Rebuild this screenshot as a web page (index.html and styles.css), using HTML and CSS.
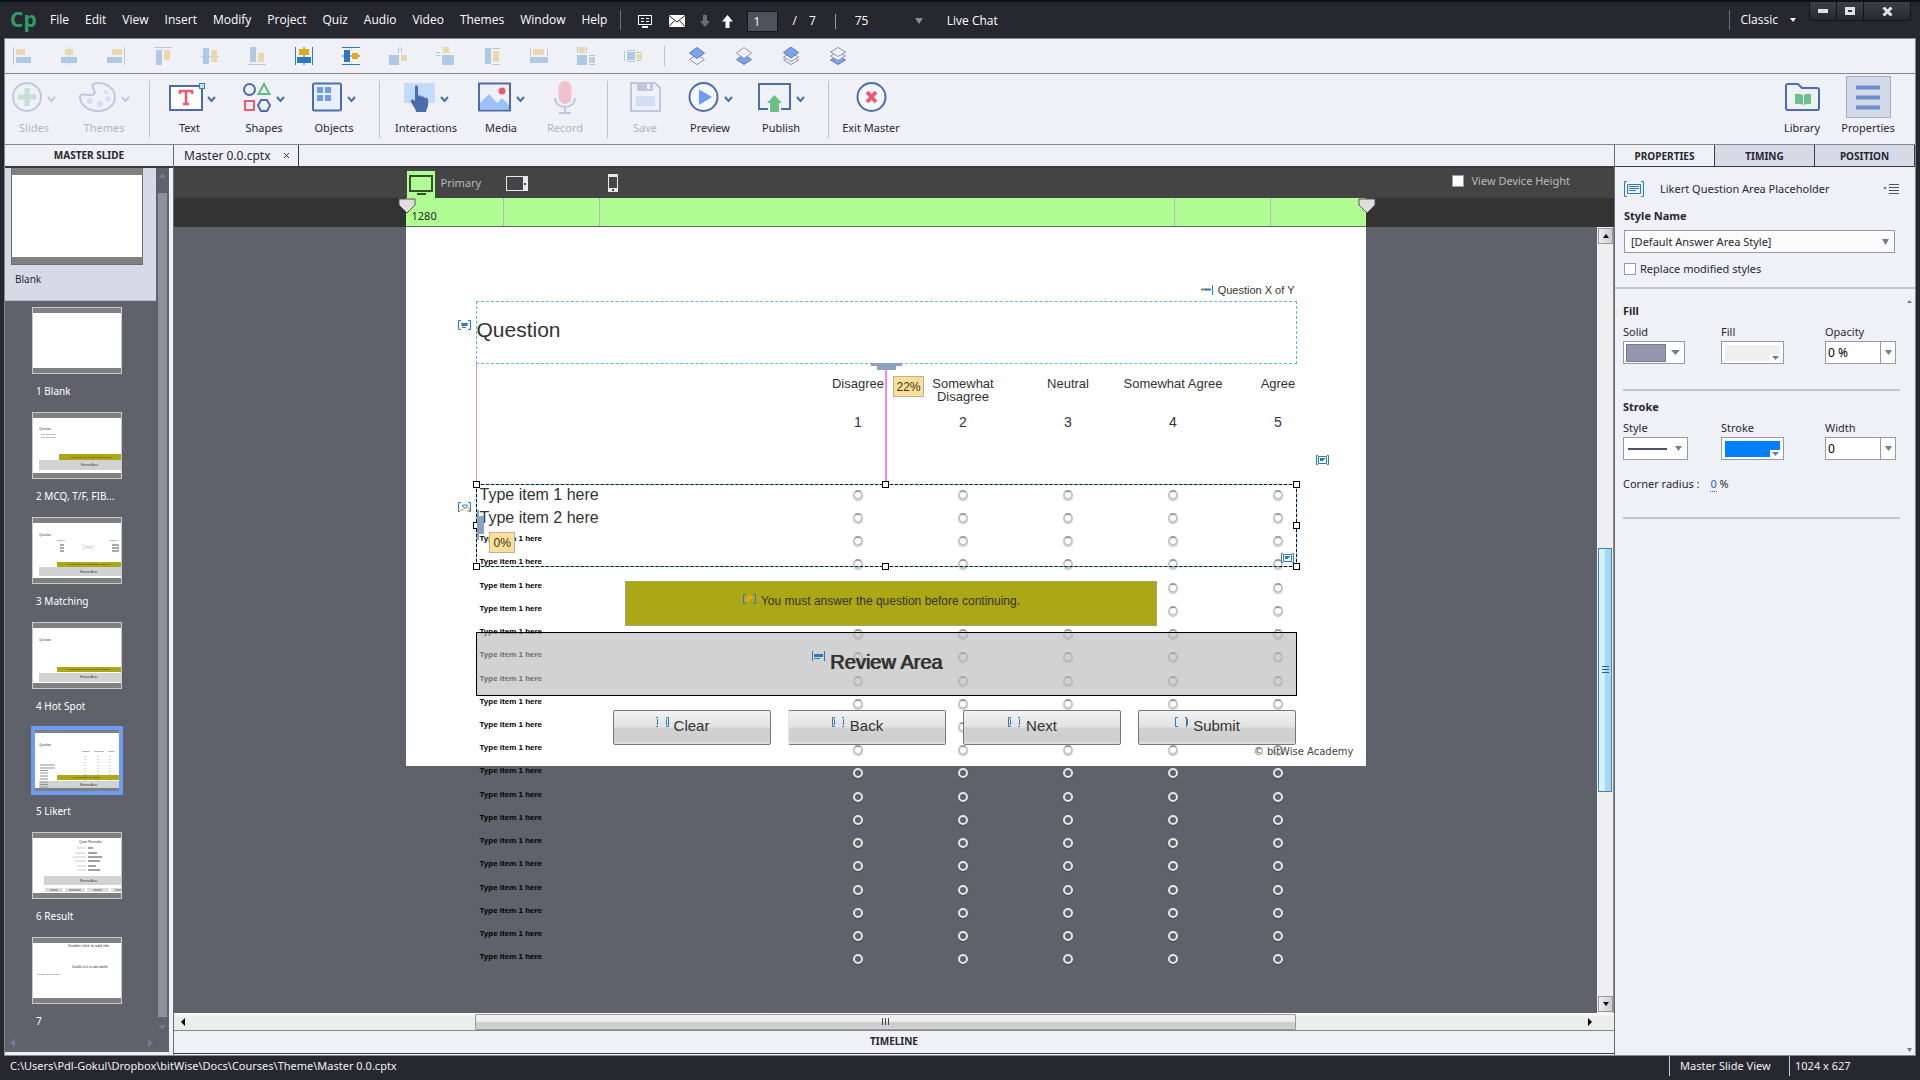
FILE: index.html
```html
<!DOCTYPE html>
<html lang="en">
<head>
<meta charset="utf-8">
<title>Master 0.0.cptx</title>
<link rel="stylesheet" href="styles.css">
<script src="script.js" defer></script>
</head>
<body>
<header class="titlebar">
  <span class="logo">Cp</span>
  <nav class="menu">
    <a href="#">File</a><a href="#">Edit</a><a href="#">View</a><a href="#">Insert</a><a href="#">Modify</a><a href="#">Project</a><a href="#">Quiz</a><a href="#">Audio</a><a href="#">Video</a><a href="#">Themes</a><a href="#">Window</a><a href="#">Help</a>
  </nav>
  <div class="quick">
    <button class="plain" aria-label="Notes"><svg width="14" height="13" viewBox="0 0 14 13"><rect x="0.5" y="0.5" width="13" height="9" fill="none" stroke="#fff"/><path d="M3 3.5h3M8 3.5h3M3 6.5h3M8 6.5h3" stroke="#fff"/><path d="M4 12h6" stroke="#fff" stroke-width="2"/></svg></button>
    <button class="plain mail" aria-label="Mail"><svg width="16" height="12" viewBox="0 0 16 12"><rect width="16" height="12" fill="#fff"/><path d="M0 0.5 8 7l8-6.5M0 11.5 5.5 5.500M16 11.500 10.500 5.500" fill="none" stroke="#26272f"/></svg></button>
    <button class="plain" aria-label="Next slide"><svg width="10" height="12" viewBox="0 0 10 12"><path d="M3 0h4v6h3L5 12 0 6h3z" fill="#6b6d76"/></svg></button>
    <button class="plain up" aria-label="Previous slide"><svg width="11" height="13" viewBox="0 0 11 13"><path d="M3.500 13h4V6.500H11L5.500 0 0 6.500h3.500z" fill="#fff"/></svg></button>
    <input class="page-no" type="text" value="1" aria-label="Slide number">
    <span class="of">/</span><span class="total">7</span>
    <span class="sep short"></span>
    <span class="zoom"><select aria-label="Zoom"><option>75</option></select><svg width="8" height="6" viewBox="0 0 8 6"><path d="M0 0h8L4 6z" fill="#8b8d95"/></svg></span>
    <a href="#" class="chat">Live Chat</a>
  </div>
  <button class="workspace">Classic <svg width="6" height="4" viewBox="0 0 6 4"><path d="M0 0h6L3 4z" fill="#fff"/></svg></button>
  <div class="window-buttons">
    <button aria-label="Minimize"><svg width="10" height="4"><rect width="10" height="4" fill="#dfe1e6"/></svg></button>
    <button aria-label="Maximize"><svg width="10" height="8"><rect x="1.500" y="1.500" width="7" height="5" fill="none" stroke="#dfe1e6" stroke-width="3"/></svg></button>
    <button class="close" aria-label="Close"><svg width="11" height="9" viewBox="0 0 11 9"><path d="M1.500 0.500l8 8M9.500 0.500l-8 8" stroke="#dfe1e6" stroke-width="3"/></svg></button>
  </div>
</header>

<div class="frame">
  <div class="alignbar">
    <div class="align-group">
      <button class="off" aria-label="Align left"><svg viewBox="0 0 18 18"><path class="l" d="M.5 0v18"/><path class="y" d="M3 2h9v6H3z"/><path class="b" d="M3 10h15v6H3z"/></svg></button>
      <button class="off" aria-label="Align center"><svg viewBox="0 0 18 18"><path class="l" d="M9 0v18"/><path class="y" d="M5 2h8v6H5z"/><path class="b" d="M1 10h16v6H1z"/></svg></button>
      <button class="off" aria-label="Align right"><svg viewBox="0 0 18 18"><path class="l" d="M17.500 0v18"/><path class="y" d="M5 2h10v6H5z"/><path class="b" d="M0 10h15v6H0z"/></svg></button>
      <button class="off" aria-label="Align top"><svg viewBox="0 0 18 18"><path class="l" d="M0 .5h18"/><path class="b" d="M2 3h6v15H2z"/><path class="y" d="M10 3h6v10h-6z"/></svg></button>
      <button class="off" aria-label="Align middle"><svg viewBox="0 0 18 18"><path class="l" d="M0 9.500h18"/><path class="b" d="M2 1h6v16H2z"/><path class="y" d="M10 3h6v12h-6z"/></svg></button>
      <button class="off" aria-label="Align bottom"><svg viewBox="0 0 18 18"><path class="l" d="M0 17.500h18"/><path class="b" d="M2 0h6v15H2z"/><path class="y" d="M10 6h6v9h-6z"/></svg></button>
      <button aria-label="Center horizontally on slide"><svg viewBox="0 0 18 18"><path class="l" d="M.5 0v18M17.500 0v18M9 0v18"/><path class="y" d="M4 2h10v6H4z"/><path class="b" d="M2 10h14v6H2z"/></svg></button>
      <button aria-label="Center vertically on slide"><svg viewBox="0 0 18 18"><path class="l" d="M0 .5h18M0 17.500h18M0 9h18"/><path class="b" d="M2 3h6v12H2z"/><path class="y" d="M10 6h6v6h-6z"/></svg></button>
      <button class="off" aria-label="Distribute horizontally"><svg viewBox="0 0 18 18"><path class="l" d="M9.500 0v6M12.500 0v6"/><path class="b" d="M0 8h10v10H0z"/><path class="y" d="M12 8h6v6h-6z"/></svg></button>
      <button class="off" aria-label="Distribute vertically"><svg viewBox="0 0 18 18"><path class="l" d="M0 5.500h4M0 8.500h4"/><path class="y" d="M7 0h6v6H7z"/><path class="b" d="M6 8h12v10H6z"/></svg></button>
      <button class="off" aria-label="Same height"><svg viewBox="0 0 18 18"><path class="l" d="M9 1.500h8M9 17.500h8"/><path class="b" d="M2 1h6v16H2z"/><path class="y" d="M10 4h6v11h-6z"/></svg></button>
      <button class="off" aria-label="Same width"><svg viewBox="0 0 18 18"><path class="l" d="M.5 2v7M17.500 2v7"/><path class="y" d="M3 2h11v6H3z"/><path class="b" d="M0 10h18v6H0z"/></svg></button>
      <button class="off" aria-label="Same size"><svg viewBox="0 0 18 18"><path class="l" d="M.5 0v6M9.500 0v6M12 8.500h6M12 17.500h6"/><path class="y" d="M2 0h6v6H2z"/><path class="b" d="M0 8h10v10H0z"/><path d="M12 10h6v6h-6z" fill="#6f8592"/></svg></button>
      <button class="off" aria-label="Same size and position"><svg viewBox="0 0 18 18"><path class="l" d="M.5 4v10M3 3.500h8M3 14.500h8M12 5.500h6M12 13.500h6"/><path class="b" d="M3 5h8v8H3z"/><path class="y" d="M12 7h6v5h-6z"/></svg></button>
    </div>
    <div class="align-group layers">
      <button aria-label="Bring forward"><svg viewBox="0 0 18 18"><path class="o" d="M9 7.500l7.500 5L9 17.500l-7.500-5z"/><path class="f" d="M9 .5l7.500 5.500L9 11.500 1.500 6z"/></svg></button>
      <button aria-label="Send backward"><svg viewBox="0 0 18 18"><path class="f" d="M9 7.500l7.500 5L9 17.500l-7.500-5z"/><path class="o" d="M9 .5l7.500 5.500L9 11.500 1.500 6z"/></svg></button>
      <button aria-label="Bring to front"><svg viewBox="0 0 18 18"><path class="o" d="M9 8.500l7.500 4.500L9 17.500 1.500 13z"/><path class="o" d="M9 5.500l7.500 4.500L9 14.500 1.500 10z"/><path class="f" d="M9 0l7.500 5.500L9 11 1.500 5.500z"/></svg></button>
      <button aria-label="Send to back"><svg viewBox="0 0 18 18"><path class="f" d="M9 8.500l7.500 4.500L9 17.500 1.500 13z"/><path class="o" d="M9 4.500l7.500 4.500L9 13.500 1.500 9z"/><path class="o" d="M9 .5l7.500 4.500L9 9.500 1.500 5z"/></svg></button>
    </div>
  </div>

  <div class="toolbar">
    <div class="tools t1">
      <button class="tool" disabled><span class="pic"><svg width="30" height="30" viewBox="0 0 30 30"><circle cx="15" cy="15" r="14" fill="none" stroke="#4b6dae" stroke-width="2"/><path d="M15 6v18M6 15h18" stroke="#5cbd7c" stroke-width="5"/></svg><svg class="chev" viewBox="0 0 9 7"><path d="M1 1l3.500 4L8 1"/></svg></span>Slides</button>
      <button class="tool" disabled><span class="pic"><svg width="37" height="30" viewBox="0 0 37 30"><path d="M1 15c0 8 8 14 18 14s17-6 17-14S28 1 19 1c-4 0-7 2-5 5s3 6-1 7-12-3-12 2z" fill="none" stroke="#4b6dae" stroke-width="2"/><circle cx="11" cy="19" r="3" fill="#8cb1ff"/><circle cx="21" cy="22" r="3" fill="#8cb1ff"/><circle cx="29" cy="17" r="2.500" fill="#8cb1ff"/><circle cx="27" cy="10" r="2" fill="#8cb1ff"/></svg><svg class="chev" viewBox="0 0 9 7"><path d="M1 1l3.500 4L8 1"/></svg></span>Themes</button>
    </div>
    <div class="tools t2">
      <button class="tool"><span class="pic tight"><svg width="37" height="30" viewBox="0 0 37 30"><path d="M1 4h32v24H1z" fill="#fff" stroke="#4b6dae" stroke-width="2"/><rect x="30.500" y="1.500" width="5" height="5" fill="#bfe3f7" stroke="#3e7fb0"/><path d="M11 12V9h12v3M17 9v14M14 22h6" fill="none" stroke="#ee5a6f" stroke-width="2.500"/></svg><svg class="chev" viewBox="0 0 9 7"><path d="M1 1l3.500 4L8 1"/></svg></span>Text</button>
      <button class="tool"><span class="pic"><svg width="28" height="30" viewBox="0 0 28 30"><circle cx="6.500" cy="7.500" r="5.500" fill="none" stroke="#4b6dae" stroke-width="2"/><path d="M21 2l5.500 10h-11z" fill="none" stroke="#5cbd7c" stroke-width="2"/><path d="M2 19h9v9H2z" fill="none" stroke="#ee5a6f" stroke-width="2"/><path d="M18 18h6l3 5.500-3 5.500h-6l-3-5.500z" fill="none" stroke="#4b6dae" stroke-width="2"/></svg><svg class="chev" viewBox="0 0 9 7"><path d="M1 1l3.500 4L8 1"/></svg></span>Shapes</button>
      <button class="tool"><span class="pic"><svg width="30" height="30" viewBox="0 0 30 30"><rect x="1" y="1.500" width="28" height="27" rx="1.500" fill="#e9f0fd" stroke="#4b6dae" stroke-width="2"/><path d="M5 5h6v6H5zM13 5h6v6h-6zM5 13h6v6H5zM13 13h6v6h-6z" fill="#6a9bf7"/></svg><svg class="chev" viewBox="0 0 9 7"><path d="M1 1l3.500 4L8 1"/></svg></span>Objects</button>
    </div>
    <div class="tools t3">
      <button class="tool"><span class="pic"><svg width="31" height="30" viewBox="0 0 31 30"><rect y="1" width="31" height="20" rx="1" fill="#c5dafb"/><path d="M11 5c0-2 3-2 3 0v9c1-1 3-1 3 1 1-1 3-1 3 1 1-1 4-1 4 2 1 5-1 8-2 12H12c0-3-3-6-5-10-1-2 1-4 4-1z" fill="#4b6dae"/></svg><svg class="chev" viewBox="0 0 9 7"><path d="M1 1l3.500 4L8 1"/></svg></span>Interactions</button>
      <button class="tool"><span class="pic"><svg width="33" height="30" viewBox="0 0 33 30"><path d="M2 27V21l9-9 8 9 5-5 7 7v4z" fill="#9cc0fb"/><rect x="1" y="1.500" width="31" height="27" fill="none" stroke="#4b6dae" stroke-width="2"/><circle cx="24" cy="9" r="3.500" fill="#ee5a6f"/></svg><svg class="chev" viewBox="0 0 9 7"><path d="M1 1l3.500 4L8 1"/></svg></span>Media</button>
      <button class="tool" disabled><span class="pic"><svg width="22" height="33" viewBox="0 0 22 33"><rect x="4.500" width="13" height="23" rx="6.500" fill="#ee5a6f"/><path d="M1 17c0 12 20 12 20 0M11 26v6M5 32h12" fill="none" stroke="#4b6dae" stroke-width="2"/></svg></span>Record</button>
    </div>
    <div class="tools t4">
      <button class="tool" disabled><span class="pic"><svg width="31" height="30" viewBox="0 0 31 30"><path d="M1 1h24l5 5v23H1z" fill="none" stroke="#4b6dae" stroke-width="2"/><path d="M7 1v8h16V1z" fill="#4b6dae"/><rect x="17" y="2" width="3" height="5" fill="#fff"/><rect x="6" y="14" width="19" height="10" fill="#8cb1ff"/></svg></span>Save</button>
      <button class="tool"><span class="pic"><svg width="31" height="30" viewBox="0 0 31 30"><circle cx="15.500" cy="15" r="14" fill="#f4f7fe" stroke="#4b6dae" stroke-width="2"/><path d="M11 7.500v15.500l13-8z" fill="#6a9bf7"/></svg><svg class="chev" viewBox="0 0 9 7"><path d="M1 1l3.500 4L8 1"/></svg></span>Preview</button>
      <button class="tool"><span class="pic"><svg width="33" height="30" viewBox="0 0 33 30"><path d="M10 27H1V2h31v25h-9" fill="none" stroke="#4b6dae" stroke-width="2"/><path d="M12 30V21H9l7.500-8 7.500 8h-3v9z" fill="#6cbf86"/></svg><svg class="chev" viewBox="0 0 9 7"><path d="M1 1l3.500 4L8 1"/></svg></span>Publish</button>
    </div>
    <div class="tools t5">
      <button class="tool"><span class="pic"><svg width="31" height="30" viewBox="0 0 31 30"><circle cx="15.500" cy="15" r="14" fill="#f4f7fe" stroke="#4b6dae" stroke-width="2"/><path d="M11 10l9 10M20 10l-9 10" stroke="#ee5a6f" stroke-width="4"/></svg></span>Exit Master</button>
    </div>
    <div class="tools t6">
      <button class="tool"><span class="pic"><svg width="35" height="28" viewBox="0 0 35 28"><path d="M1 25V3q0-2 2-2h10l4 4h15q2 0 2 2v18q0 2-2 2H3q-2 0-2-2z" fill="none" stroke="#4b6dae" stroke-width="2"/><path d="M10 11q4-1 8 1v10q-4-2-8-1zM26 11q-4-1-7 1v10q3-2 7-1z" fill="#6cbf86"/></svg></span>Library</button>
      <button class="tool active"><span class="pic"><svg width="24" height="25" viewBox="0 0 24 25"><path d="M0 2.500h24M0 12.500h24M0 22.500h24" stroke="#6d8fcb" stroke-width="4"/></svg></span>Properties</button>
    </div>
  </div>

  <div class="workarea">
    <aside class="left">
      <h2 class="panel-title">MASTER SLIDE</h2>
      <div class="slides">
        <div class="slide-list">
          <button class="master"><span class="thumb big"></span>Blank</button>
          <button class="entry"><span class="thumb"></span>1 Blank</button>
          <button class="entry"><span class="thumb"><svg viewBox="0 0 88 55"><text x="6" y="12" font-size="3">Question</text><text x="8" y="17" font-size="2">Type item 1 here</text><text x="8" y="20" font-size="2">Type item 2 here</text><path d="M26 36h62v6H26z" fill="#aba717"/><path d="M6 42h82v10H6z" fill="#d2d2d2"/><text x="36" y="40" font-size="2">You must answer the question before continuing</text><text x="48" y="48" font-size="3">Review Area</text></svg></span>2 MCQ, T/F, FIB...</button>
          <button class="entry"><span class="thumb"><svg viewBox="0 0 88 55"><text x="6" y="13" font-size="3">Question</text><text x="24" y="18" font-size="2">Column 1</text><text x="77" y="18" font-size="2">Column 2</text><path d="M27 22h4M27 25h4M27 28h4M79 22h7M79 25h7M79 28h7" stroke="#555"/><path d="M49 21l12 6M49 27l12-5M49 24h12" stroke="#bbb" stroke-width=".5"/><path d="M24 39h64v5H24z" fill="#aba717"/><path d="M6 44h82v9H6z" fill="#d2d2d2"/><text x="34" y="42" font-size="2">You must answer the question before continuing</text><text x="47" y="50" font-size="3">Review Area</text></svg></span>3 Matching</button>
          <button class="entry"><span class="thumb"><svg viewBox="0 0 88 55"><text x="6" y="13" font-size="3">Question</text><path d="M24 39h64v5H24z" fill="#aba717"/><path d="M6 45h82v9H6z" fill="#d2d2d2"/><text x="34" y="42" font-size="2">You must answer the question before continuing</text><text x="47" y="50" font-size="3">Review Area</text></svg></span>4 Hot Spot</button>
          <button class="entry current"><span class="thumb"><svg viewBox="0 0 88 55"><text x="6" y="13" font-size="3">Question</text><text x="49" y="19" font-size="2">Disagree</text><text x="61" y="19" font-size="2">Somewhat</text><text x="75" y="19" font-size="2">Neutral</text><path d="M7 32h15M7 35h15M7 37.500h8M7 40h8M7 43h8M7 46h8" stroke="#777" stroke-width=".8"/><path d="M52 23v28M65 23v28M77 23v28" stroke="#aaa" stroke-dasharray="1 2"/><path d="M24 42h64v5H24z" fill="#aba717"/><path d="M6 48h82v7H6z" fill="#d2d2d2"/><path d="M7 49h8M7 51.500h8M7 54h8" stroke="#888" stroke-width=".8"/><text x="40" y="45" font-size="2">You must answer the question</text><text x="47" y="53" font-size="3">Review Area</text></svg></span>5 Likert</button>
          <button class="entry"><span class="thumb"><svg viewBox="0 0 88 55"><text x="46" y="5" font-size="4">Quiz Results</text><path d="M44 10h9M42 15h11M40 19h13M42 23h11M44 28h9M45 32h8" stroke="#bbb" stroke-width=".8"/><path d="M55 10h5M55 15h9M55 19h14M55 23h12M55 28h8M55 32h12" stroke="#444"/><path d="M11 38h77v9H11z" fill="#d2d2d2"/><text x="47" y="44" font-size="3">Review Area</text><path d="M12 50h18v4H12zM32 50h20v4H32zM54 50h22v4H54zM78 50h10v4H78z" fill="#ddd"/><path d="M17 52h8M36 52h12M60 52h9M82 52h6" stroke="#555" stroke-width=".8"/></svg></span>6 Result</button>
          <button class="entry"><span class="thumb"><svg viewBox="0 0 88 55"><text x="35" y="4" font-size="4">Double click to add title</text><text x="39" y="25" font-size="3">Double click to add subtitle</text><text x="4" y="32" font-size="2">Type the caption text here</text></svg></span>7</button>
        </div>
        <div class="slide-scroll"><svg width="7" height="5"><path d="M0 5h7L3.500 0z"/></svg><span></span><svg width="7" height="5"><path d="M0 0h7L3.500 5z"/></svg></div>
      </div>
      <div class="slide-hscroll"><svg width="5" height="8"><path d="M5 0v8L0 4z"/></svg><svg width="5" height="8"><path d="M0 0v8l5-4z"/></svg></div>
    </aside>

    <main class="center">
      <div class="doc-tabs"><span class="doc-tab">Master 0.0.cptx<button aria-label="Close tab"><svg width="7" height="7" viewBox="0 0 7 7"><path d="M1 1l5 5M6 1L1 6" stroke="#26272f"/></svg></button></span></div>
      <div class="devices">
        <div class="device-set">
          <button class="device on" aria-label="Desktop"><svg width="24" height="20" viewBox="0 0 24 20"><rect x="1" y="1" width="22" height="15" fill="none" stroke="#33522b" stroke-width="2"/><path d="M8 19h9" stroke="#33522b" stroke-width="2"/></svg></button>
          <span class="device-name">Primary</span>
          <button class="device tablet" aria-label="Tablet"><svg width="22" height="15" viewBox="0 0 22 15"><rect x=".5" y=".5" width="21" height="14" fill="none" stroke="#e8e8ee"/><path d="M17 0h5v15h-5z" fill="#e8e8ee"/><path d="M18 7h2v2h-2z" fill="#444"/></svg></button>
          <button class="device phone" aria-label="Phone"><svg width="10" height="18" viewBox="0 0 10 18"><path d="M0 0h10v18H0z" fill="#e8e8ee"/><path d="M1 3h8v11H1zM4 15h2v2H4z" fill="#444"/></svg></button>
        </div>
        <label class="device-height"><input type="checkbox">View Device Height</label>
      </div>
      <div class="ruler">
        <div class="ruler-track"><span class="mark start"><svg width="18" height="16" viewBox="0 0 18 16"><path d="M1 1h16v6l-8 8-8-8z" fill="#dedede" stroke="#555"/></svg></span>1280<i class="tick a"></i><i class="tick b"></i><i class="tick c"></i><i class="tick d"></i><span class="mark end"><svg width="18" height="16" viewBox="0 0 18 16"><path d="M1 1h16v6l-8 8-8-8z" fill="#dedede" stroke="#555"/></svg></span></div>
      </div>
      <div class="stage-row">
        <div class="stage">
          <div class="canvas">
            <div class="page"></div>
            <div class="progress"><svg width="12" height="10" viewBox="0 0 12 10"><path d="M0 4.500h5" stroke="#8a8a3a" stroke-width="2"/><path d="M4 4.500h6" stroke="#2b7abf" stroke-width="2"/><path d="M11.500 0v10" stroke="#2b7abf"/></svg>Question X of Y</div>
            <div class="question"><svg class="ph out" viewBox="0 0 13 10"><path d="M3 .5H.5v9H3M10 .5h2.500v9H10M3 3.500h7M3 5.500h7M4 4.500h5M4 7.500h4"/></svg>Question</div>
            <div class="scale">
              <span>Disagree</span><span>Somewhat Disagree</span><span>Neutral</span><span>Somewhat Agree</span><span>Agree</span>
              <b>1</b><b>2</b><b>3</b><b>4</b><b>5</b>
            </div>
            <div class="items" id="items"></div>
            <svg class="ph side" viewBox="0 0 13 10"><path d="M2 .5H.5v9H2M11 .5h1.500v9H11M2.500 1.500h8v7h-8zM4 3.500h5M4 5.500h3M4 4.500h4"/></svg>
            <svg class="ph feedback" viewBox="0 0 13 10"><path d="M3 .5H.5v9H2M10 .5h2.500v9H11M4 3l2 3h2l2-3M5 3h4"/><path d="M2 8h4M11 5v4H9" stroke="#c8a02a"/></svg>
            <span class="guide thin"></span><span class="guide thick"></span>
            <svg class="anchor-top" width="31" height="7" viewBox="0 0 31 7"><path d="M0 0h31v3H25v4H6V3H0z" fill="#8aa2bd"/></svg>
            <div class="selection"><i class="h nw"></i><i class="h n"></i><i class="h ne"></i><i class="h w"></i><i class="h e"></i><i class="h sw"></i><i class="h s"></i><i class="h se"></i>
              <svg class="ph corner" viewBox="0 0 13 10"><path d="M2 .5H.5v9H2M11 .5h1.500v9H11M2.500 1.500h8v7h-8zM4 3.500h5M4 5.500h3M4 4.500h4"/></svg></div>
            <svg class="anchor-left" width="7" height="30" viewBox="0 0 7 30"><path d="M0 0h2v6h5v18H2v6H0z" fill="#8aa2bd"/></svg>
            <span class="tip top">22%</span><span class="tip left-tip">0%</span>
            <div class="warning"><span class="with-ph"><svg class="ph out" viewBox="0 0 13 10"><path d="M3 .5H.5v9H3M10 .5h2.500v9H10"/><path d="M2 7c1-5 4-6 8-5-1 3-4 7-8 5z" fill="#f0a010" stroke="none"/></svg>You must answer the question before continuing.</span></div>
            <div class="review"><span class="with-ph"><svg class="ph out" viewBox="0 0 13 10"><path d="M.5 0v10M12.500 0v10M2 3.500h9M2 5.500h9M2 4.500h9M2 7.500h6"/></svg>Review Area</span></div>
            <div class="nav-buttons">
              <button><span class="with-ph"><svg class="ph out" viewBox="0 0 13 10"><path d="M0 .5h2M1.500 2v6M0 9.500h2M10 .5h2.500v9H10M10.500 2v6"/></svg>Clear</span></button>
              <button><span class="with-ph"><svg class="ph out" viewBox="0 0 13 10"><path d="M3 .5H.5v9H3M2.500 2v6M10 .5h2M11.500 2v6M10 9.500h2"/></svg>Back</span></button>
              <button><span class="with-ph"><svg class="ph out" viewBox="0 0 13 10"><path d="M3 .5H.5v9H3M2.500 2v6M10 .5h2M11.500 2v6M10 9.500h2"/></svg>Next</span></button>
              <button><span class="with-ph"><svg class="ph out" viewBox="0 0 13 10"><path d="M3 .5H.5v9H3M10 .5h2M11.500 0v10M12.500 2v6"/></svg>Submit</span></button>
            </div>
            <div class="copyright">© bitWise Academy</div>
          </div>
        </div>
        <div class="vscroll"><button aria-label="Scroll up"><svg width="6" height="4"><path d="M0 4h6L3 0z"/></svg></button><span class="grip"><svg width="7" height="8"><path d="M0 .5h7M0 3.500h7M0 6.500h7" stroke="#2b5f86" stroke-width="1"/></svg></span><button aria-label="Scroll down"><svg width="6" height="4"><path d="M0 0h6L3 4z"/></svg></button></div>
      </div>
      <div class="hscroll"><svg width="4" height="8"><path d="M4 0v8L0 4z"/></svg><span class="hgrip"><svg width="8" height="7"><path d="M.5 0v7M3.500 0v7M6.500 0v7" stroke="#444"/></svg></span><svg width="4" height="8"><path d="M0 0v8l4-4z"/></svg></div>
      <h2 class="timeline">TIMELINE</h2>
    </main>

    <aside class="right">
      <div class="tabs"><button class="on">PROPERTIES</button><button>TIMING</button><button>POSITION</button></div>
      <div class="props">
        <div class="top-props">
          <div class="object"><svg width="20" height="16" viewBox="0 0 20 16"><path d="M3 .5H.5v15H3M17 .5h2.500v15H17M3.500 3.500h13v9h-13zM5 5.500h10M5 7.500h10M5 9.500h7" fill="none" stroke="#2b7abf"/></svg><span>Likert Question Area Placeholder</span><button class="plain" aria-label="Panel menu"><svg width="16" height="11" viewBox="0 0 16 11"><path d="M0 3h4L2 6z" fill="#7a7d95"/><path d="M6 .5h10M6 3.500h10M6 6.500h10M6 9.500h10" stroke="#4e5272"/></svg></button></div>
          <label class="bold" for="style-name">Style Name</label>
          <div class="combo"><select id="style-name"><option>[Default Answer Area Style]</option></select><svg width="7" height="6"><path d="M0 0h7L3.500 6z"/></svg></div>
          <label class="check"><input type="checkbox">Replace modified styles</label>
        </div>
        <section class="section">
          <h3 class="bold">Fill</h3>
          <div class="fields">
            <div><label for="solid">Solid</label><button id="solid" class="swatch grey"><span></span><svg width="9" height="5"><path d="M0 0h9L4.500 5z"/></svg></button></div>
            <div><label for="fill">Fill</label><button id="fill" class="color pale"><span></span><svg viewBox="0 0 11 8"><path d="M2 2h7L5.500 6z"/></svg></button></div>
            <div><label for="opacity">Opacity</label><span class="spin"><input id="opacity" type="text" value="0 %"><button aria-label="Opacity list"><svg width="7" height="5"><path d="M0 0h7L3.500 5z"/></svg></button></span></div>
          </div>
        </section>
        <section class="section">
          <h3 class="bold">Stroke</h3>
          <div class="fields">
            <div><label for="line">Style</label><button id="line" class="swatch line"><span></span><svg width="7" height="5"><path d="M0 0h7L3.500 5z"/></svg></button></div>
            <div><label for="stroke">Stroke</label><button id="stroke" class="color blue"><span></span><svg viewBox="0 0 11 8"><path d="M2 2h7L5.500 6z"/></svg></button></div>
            <div><label for="width">Width</label><span class="spin"><input id="width" type="text" value="0"><button aria-label="Width list"><svg width="7" height="5"><path d="M0 0h7L3.500 5z"/></svg></button></span></div>
          </div>
          <p class="radius">Corner radius : <a href="#">0</a> %</p>
        </section>
        <svg class="more up-more" width="5" height="3"><path d="M0 3h5L2.500 0z"/></svg>
        <svg class="more down-more" width="5" height="4"><path d="M0 0h5L2.500 4z"/></svg>
      </div>
    </aside>
  </div>
</div>

<footer class="status"><span class="path">C:\Users\Pdl-Gokul\Dropbox\bitWise\Docs\Courses\Theme\Master 0.0.cptx</span><span class="mode">Master Slide View</span><span class="size">1024 x 627</span></footer>
</body>
</html>
```
FILE: styles.css
```css
* { box-sizing: border-box; }
body {
  margin: 0;
  min-height: 100vh;
  display: flex;
  flex-direction: column;
  background: #26272f;
  color: #26272f;
  font: 11px/16px "Noto Sans", sans-serif;
}
button, input, select { font: inherit; color: inherit; margin: 0; }
button { background: none; border: 0; padding: 0; }
a { color: inherit; text-decoration: none; }
h2, h3, p { margin: 0; font-size: inherit; }
svg { display: block; flex: none; }

/* Title bar */
.titlebar {
  display: flex;
  height: 38px;
  padding-left: 10px;
  border-top: 2px solid #101116;
  color: #fff;
  font-family: "Open Sans", sans-serif;
  font-size: 12px;
  align-items: center;
}
.logo { width: 40px; font: bold 21px/24px "Open Sans", sans-serif; color: #2f9e62; padding-bottom: 2px; }
.menu { display: flex; gap: 16px; padding-right: 13px; border-right: 1px solid #6b6d76; line-height: 20px; }
.quick { display: flex; align-items: center; margin-left: 17px; padding-top: 2px; }
.mail { margin: 0 15px 0 17px; }
.up { margin: 0 14px 0 12px; }
.page-no { width: 31px; height: 21px; padding: 0 5px; background: #4f525c; border: 1px solid #15161b; color: #fff; }
.of { margin-left: 14px; }
.total { margin-left: 12px; }
.sep.short { width: 1px; height: 15px; margin: 0 19px; background: #9a9ca4; }
.zoom { display: flex; align-items: center; width: 92px; justify-content: space-between; padding-right: 24px; }
.zoom select { appearance: none; background: none; border: 0; padding: 0; width: 40px; }
.workspace { display: flex; align-items: center; gap: 12px; margin-left: auto; padding: 0 13px 0 11px; border-left: 1px solid #6b6d76; line-height: 20px; }
.window-buttons { display: flex; align-self: flex-start; margin-right: 9px; height: 19px; border: 1px solid #14151a; border-top: 0; border-radius: 0 0 3px 3px; background: linear-gradient(#3d3f47, #26272f); }
.window-buttons button { width: 27px; display: flex; align-items: center; justify-content: center; border-right: 1px solid #14151a; }
.window-buttons .close { width: 46px; border: 0; }

/* Frame */
.frame { flex: 1; display: flex; flex-direction: column; margin: 0 4px; border: 1px solid #85878e; background: #f0f1f7; }
.alignbar { display: flex; align-items: center; height: 35px; padding-left: 8px; border-bottom: 1px solid #85878e; }
.align-group { display: flex; gap: 29px; height: 20px; align-items: center; padding-right: 22px; border-right: 1px solid #c1c3ca; }
.align-group.layers { padding-left: 23px; border: 0; }
.align-group svg { width: 18px; height: 18px; }
.off { opacity: .33; }
.l { stroke: #2b7abf; fill: none; }
.b { fill: #2b7abf; }
.y { fill: #e3a812; }
.o { fill: #f0f1f7; stroke: #8f93aa; }
.f { fill: #7fa2ee; stroke: #5d79bd; }

.toolbar { display: flex; height: 71px; border-bottom: 1px solid #85878e; }
.tools { display: grid; height: 57px; margin-top: 7px; border-right: 1px solid #c1c3ca; }
.t1 { grid-template-columns: 58px 82px; padding-right: 4px; }
.t2 { grid-template-columns: 79px 70px 70px; padding-right: 10px; }
.t3 { grid-template-columns: 92px 58px 70px; padding-right: 7px; }
.t4 { grid-template-columns: 74px 56px 86px; padding-right: 4px; }
.t5 { grid-template-columns: 84px; border: 0; }
.t6 { grid-template-columns: 66px 66px; margin-left: auto; margin-right: 14px; border: 0; }
.tool { display: flex; flex-direction: column; align-items: center; line-height: 15px; white-space: nowrap; }
.tool:disabled { opacity: .3; color: inherit; }
.pic { display: flex; align-items: center; gap: 5px; height: 32px; margin-bottom: 7px; }
.pic.tight { gap: 1px; padding-left: 6px; }
.chev { width: 9px; height: 7px; margin-top: 4px; fill: none; stroke: #4b6dae; stroke-width: 2; }
.active .pic { width: 45px; height: 42px; margin: -5px 0 2px; justify-content: center; background: #d2d9e8; border: 1px solid #a7adc6; }

.workarea { flex: 1; display: grid; grid-template-columns: 169px 1fr 301px; }

/* Master slide list */
.left { display: flex; flex-direction: column; border-right: 1px solid #6b6d72; }
.panel-title { height: 23px; border-bottom: 2px solid #3b3c42; font-size: 10px; line-height: 21px; text-align: center; }
.slides { flex: 1; display: flex; width: 164px; background: #5f626a; }
.slide-list { width: 152px; color: #fff; font-size: 10px; }
.master { display: flex; flex-direction: column; gap: 6px; width: 151px; height: 133px; padding: 0 0 0 6px; text-align: left; background: #d6dae7; color: #26272f; border-bottom: 1px solid #b9bdcb; line-height: 16px; }
.thumb { display: block; width: 90px; height: 67px; background: #fff; border: 1px solid #c9c9c9; box-shadow: inset 0 5px #808080, inset 0 -5px #808080; padding-top: 5px; }
.thumb svg { width: 88px; height: 55px; font-family: "Liberation Sans", sans-serif; fill: #333; text-indent: 0; }
.thumb.big { width: 132px; height: 97px; border: 1px solid #6c6e74; border-top: 0; box-shadow: inset 0 7px #808080, inset 0 -7px #808080; }
.entry { display: flex; flex-direction: column; gap: 9px; height: 105px; padding: 6px 0 0 27px; text-align: left; line-height: 16px; }
.entry, .master { text-indent: 4px; }
.current .thumb { outline: 4px solid #6b9bf5; outline-offset: -3px; }
.slide-scroll { display: flex; flex-direction: column; align-items: center; gap: 8px; width: 11px; padding: 5px 0 6px; fill: #77799a; }
.slide-scroll span { flex: 1; width: 9px; margin-top: 7px; background: #8e909d; }
.slide-hscroll { display: flex; justify-content: space-between; width: 164px; height: 16px; padding: 3px 16px 0 5px; background: #5f626a; fill: #77799a; margin-bottom: 3px; }

/* Document area */
.center { display: flex; flex-direction: column; min-width: 0; }
.doc-tabs { height: 23px; border-bottom: 2px solid #3b3c42; }
.doc-tab { display: inline-flex; align-items: center; gap: 12px; height: 21px; width: 125px; padding-left: 10px; border-right: 1px solid #3b3c42; font-size: 12px; }
.devices, .ruler { display: grid; grid-template-columns: 1fr 960px 1fr; padding-right: 17px; }
.devices { height: 30px; background: #444; color: #b9b9b9; }
.device-set { grid-column: 2; display: flex; align-items: center; padding-left: 1px; }
.device.on { align-self: flex-end; height: 27px; width: 28px; padding: 3px 2px; background: #b0fe93; }
.device-name { width: 71px; padding-left: 6px; }
.phone { margin-left: 80px; }
.device-height { display: flex; align-items: center; gap: 8px; margin-left: 86px; padding-bottom: 4px; }
input[type="checkbox"] { appearance: none; width: 12px; height: 12px; border: 1px solid #9598ae; background: #fff; }
.ruler { height: 29px; background: #333; }
.ruler-track { grid-column: 2; position: relative; padding: 10px 0 0 6px; background: #b0fe93; border-bottom: 1px solid #666; }
.mark { position: absolute; top: 0; }
.start { left: -8px; }
.end { right: -10px; }
.tick { position: absolute; top: 0; bottom: 0; width: 1px; background: #b8b4b8; }
.tick.a { left: 97px; }
.tick.b { left: 193px; }
.tick.c { right: 191px; }
.tick.d { right: 95px; }

.stage-row { flex: 1; display: flex; }
.stage { flex: 1; background: #5f626a; }
.canvas { position: relative; width: 960px; min-height: 760px; margin: 0 auto; color: #333; font-family: "Liberation Sans", sans-serif; }
.canvas > * { position: absolute; }
.page { inset: 0 0 auto 0; height: 539px; background: #fff; }
.ph { width: 13px; height: 10px; fill: none; stroke: #2b7abf; position: absolute; }
.with-ph { position: relative; }
.with-ph .out { right: calc(100% + 5px); top: 0; }
.progress { top: 55px; right: 71px; display: flex; align-items: center; gap: 5px; }
.question { left: 70px; top: 74px; width: 821px; height: 63px; border: 1px dashed #5cbbdc; font-size: 21px; line-height: 56px; }
.question .out { left: -19px; top: 18px; }
.scale { left: 400px; top: 150px; width: 525px; display: grid; grid-template-columns: repeat(5, 105px); row-gap: 11px; text-align: center; font-size: 13px; line-height: 13px; }
.scale span { justify-self: center; }
.scale span:nth-child(2) { max-width: 70px; }
.scale b { font-weight: normal; font-size: 14px; line-height: 16px; }
.items { left: 74px; top: 256px; width: 851px; height: 488px; display: grid; grid-template-rows: repeat(21, 1fr); }
.item { display: grid; grid-template-columns: 326px repeat(5, 105px); align-items: center; justify-items: center; }
.item span { justify-self: start; font-size: 16px; line-height: 20px; padding-top: 1px; }
.item.small span { color: #000; font: bold 8px/12px "Liberation Sans", sans-serif; margin-bottom: 5px; }
.item input { appearance: none; width: 10px; height: 10px; border-radius: 50%; border: 2px solid #c6c6c6; border-top-color: #9c9c9c; box-shadow: 0 1px 1px #8888; }
.item.below input { border-color: #e6e6e6; box-shadow: 0 1px 1px #3338; }
.side { left: 910px; top: 228px; }
.feedback { left: 52px; top: 275px; }
.guide.thin { left: 70px; top: 136px; width: 1px; height: 121px; background: #dd90e6; }
.guide.thick { left: 479px; top: 141px; width: 2px; height: 116px; background: #f289ec; }
.anchor-top { left: 465px; top: 136px; }
.selection {
  left: 70px; top: 257px; width: 821px; height: 83px;
  border: 1px dashed #111;
  background:
    linear-gradient(#6ccdf5, #6ccdf5) top / 100% 1px no-repeat border-box,
    linear-gradient(#6ccdf5, #6ccdf5) bottom / 100% 1px no-repeat border-box,
    linear-gradient(#6ccdf5, #6ccdf5) left / 1px 100% no-repeat border-box,
    linear-gradient(#6ccdf5, #6ccdf5) right / 1px 100% no-repeat border-box;
}
.selection .corner { right: 2px; bottom: 3px; }
.h { position: absolute; width: 7px; height: 7px; background: #fff; border: 1px solid #000; }
.nw, .w, .sw { left: -4px; }
.ne, .e, .se { right: -4px; }
.n, .s { left: calc(50% - 4px); }
.nw, .n, .ne { top: -4px; }
.w, .e { top: calc(50% - 4px); }
.sw, .s, .se { bottom: -4px; }
.anchor-left { left: 71px; top: 283px; }
.tip { height: 21px; padding: 0 5px; background: #fde095; border: 1px solid #b5b39d; font-size: 12px; line-height: 20px; }
.tip.top { left: 487px; top: 149px; width: 31px; padding: 0 3px; }
.tip.left-tip { left: 83px; top: 305px; width: 26px; padding: 0 4px; }
.warning { left: 219px; top: 354px; width: 532px; height: 45px; background: #aba717; border: 1px solid #a3a860; text-align: center; font-size: 12px; line-height: 39px; }
.review { left: 70px; top: 405px; width: 821px; height: 64px; background: rgba(180, 180, 180, .6); border: 1px solid #000; text-align: center; font-size: 20px; line-height: 58px; text-shadow: 1px 0 #333; }
.nav-buttons { left: 207px; right: 70px; top: 483px; display: grid; grid-template-columns: repeat(4, 1fr); gap: 17px; font-size: 15px; }
.nav-buttons button { height: 35px; border: 1px solid #777; border-radius: 2px; background: linear-gradient(#f2f2f2, #e2e2e2 48%, #d2d2d2 52%, #cecece 90%, #e6e6e6); padding-bottom: 3px; }
.nav-buttons button:nth-child(2) { border-left-color: #e4e4e4; }
.copyright { right: 12px; top: 517px; font: 10px/16px "DejaVu Sans", sans-serif; color: #444; }

.vscroll { display: flex; flex-direction: column; width: 17px; padding: 1px; background: #efefef; border-right: 1px solid #85878e; }
.vscroll button { width: 15px; height: 16px; display: flex; align-items: center; justify-content: center; border: 1px solid #999; background: linear-gradient(90deg, #eee, #ccc); }
.grip { margin: 304px 0 auto; height: 244px; display: flex; align-items: center; justify-content: center; border: 1px solid #4584b0; background: linear-gradient(90deg, #d4f1fe 45%, #a6d8f1 50%); }
.hscroll { display: flex; align-items: center; height: 18px; padding: 0 22px 0 7px; background: linear-gradient(#fff, #ebecec 4px); border-bottom: 1px solid #85878e; }
.hgrip { flex: 0 1 821px; height: 16px; margin: 0 auto 0 290px; display: flex; align-items: center; justify-content: center; border: 1px solid #999; border-radius: 1px; background: linear-gradient(#f0f0f0 40%, #c9caca 60%, #d2d2d2); }
.timeline { height: 23px; border-bottom: 1px solid #3b3c42; font-size: 10px; line-height: 21px; text-align: center; margin-bottom: 1px; }

/* Properties */
.right { display: flex; flex-direction: column; border-left: 1px solid #6b6d72; }
.tabs { display: grid; grid-template-columns: repeat(3, 1fr); height: 22px; border-bottom: 1px solid #3b3c42; }
.tabs button { background: #d6dae7; border-right: 1px solid #3b3c42; font-size: 10px; font-weight: bold; }
.tabs .on { background: none; }
.props { flex: 1; position: relative; fill: #777a94; }
.top-props { padding: 14px 20px 0 9px; height: 122px; border-bottom: 2px solid #c3c5cb; }
.object { display: flex; align-items: center; height: 16px; gap: 16px; margin-right: -4px; }
.object button { margin-left: auto; }
.bold { display: block; font-weight: bold; }
.top-props .bold { margin: 11px 0 6px; }
.combo { display: flex; align-items: center; height: 23px; border: 1px solid #9598ae; background: #fbfbfd; padding-right: 5px; }
.combo select { flex: 1; appearance: none; background: none; border: 0; padding: 0 6px; }
.check { display: flex; align-items: center; gap: 4px; margin-top: 8px; }
.section { margin: 0 15px 0 8px; padding: 14px 0 25px; border-bottom: 2px solid #c3c5cb; }
.section + .section { padding-top: 8px; }
.fields { display: grid; grid-template-columns: 98px 104px 71px; margin-top: 5px; }
.fields label { display: block; height: 17px; }
.swatch, .color, .spin { display: flex; height: 23px; border: 1px solid #9598ae; background: #fff; align-items: center; }
.swatch { justify-content: space-between; width: 62px; padding: 0 4px 0 2px; }
.swatch span { width: 40px; height: 18px; border: 1px solid #777a94; background: #9598ad; }
.swatch.line { width: 65px; padding: 0 5px 0 4px; }
.swatch.line span { width: 39px; height: 2px; background: #4e5166; border: 0; }
.color { position: relative; width: 63px; padding: 3px; }
.color span { flex: 1; height: 16px; }
.pale span { background: #efefef; }
.blue span { background: #0080ff; }
.color svg { position: absolute; right: 2px; bottom: 1px; width: 11px; height: 8px; background: #fff; }
.spin input { width: 55px; height: 21px; border: 0; border-right: 1px solid #9598ae; padding: 0 2px; background: #fff; font-size: 12px; color: #000; }
.spin button { flex: 1; display: flex; justify-content: center; }
.radius { margin-top: 16px; }
.radius a { margin-left: 8px; color: #2567c4; border-bottom: 1px dotted #2567c4; }
.more { position: absolute; right: 3px; }
.up-more { top: 133px; }
.down-more { bottom: 3px; }

/* Status bar */
.status { display: flex; align-items: center; height: 25px; padding: 0 0 5px 10px; color: #f0f0f4; }
.path { margin-right: auto; }
.mode, .size { border-left: 1px solid #c9cad0; line-height: 20px; }
.mode { width: 120px; padding-left: 10px; }
.size { width: 131px; padding-left: 5px; }
```
FILE: script.js
```js
// Builds the 21 answer rows of the Likert grid, five choices in each.
const items = document.getElementById('items');
for (let row = 0; row < 21; row++) {
  const item = document.createElement('div');
  item.className = 'item' + (row > 1 ? ' small' : '') + (row > 11 ? ' below' : '');
  const text = document.createElement('span');
  text.textContent = row === 1 ? 'Type item 2 here' : 'Type item 1 here';
  item.append(text);
  for (let col = 1; col <= 5; col++) {
    const radio = document.createElement('input');
    radio.type = 'radio';
    radio.name = 'item' + row;
    radio.setAttribute('aria-label', 'Row ' + (row + 1) + ', answer ' + col);
    item.append(radio);
  }
  items.append(item);
}
```
